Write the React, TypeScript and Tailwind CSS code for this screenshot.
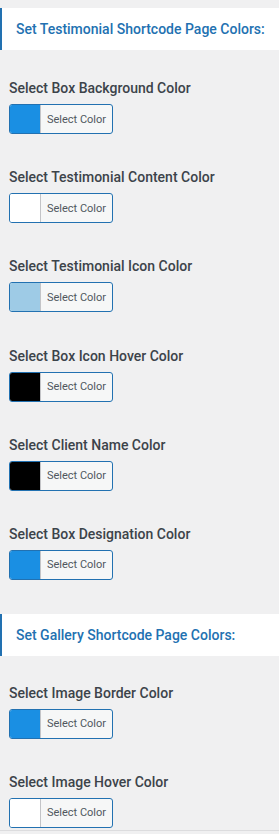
import React from 'react';

type Field = { label: string; color: string };

const testimonialFields: Field[] = [
  { label: 'Select Box Background Color', color: '#1a8fe3' },
  { label: 'Select Testimonial Content Color', color: '#ffffff' },
  { label: 'Select Testimonial Icon Color', color: '#9ecbe6' },
  { label: 'Select Box Icon Hover Color', color: '#000000' },
  { label: 'Select Client Name Color', color: '#000000' },
  { label: 'Select Box Designation Color', color: '#1a8fe3' },
];

const galleryFields: Field[] = [
  { label: 'Select Image Border Color', color: '#1a8fe3' },
  { label: 'Select Image Hover Color', color: '#ffffff' },
];

const SectionHeader = ({ title }: { title: string }) => (
  <div className="h-[42px] bg-white border-l-2 border-[#2271b1] flex items-center pl-[14px]">
    <h2 className="text-[14px] font-medium text-[#2271b1] leading-none">{title}</h2>
  </div>
);

const ColorField = ({ label, color }: Field) => (
  <div className="px-[9px]">
    <label className="block text-[14px] leading-[20px] font-medium text-[#3c434a]">{label}</label>
    <button className="mt-[6px] flex h-[30px] w-[104px] overflow-hidden rounded-[3px] border border-[#2271b1] bg-[#f6f7f7]">
      <span className="block h-full w-[31px] border-r border-[#c3c4c7]" style={{ backgroundColor: color }} />
      <span className="flex-1 self-center text-center text-[11px] leading-none text-[#50575e]">Select Color</span>
    </button>
  </div>
);

export default function App() {
  return (
    <div className="w-[279px] h-[834px] bg-[#f0f0f1] font-['Roboto',sans-serif] overflow-hidden pt-[8px]">
      <SectionHeader title="Set Testimonial Shortcode Page Colors:" />
      <div className="flex flex-col gap-[33.2px] pt-[28px]">
        {testimonialFields.map((f) => (
          <ColorField key={f.label} {...f} />
        ))}
      </div>
      <div className="mt-[34px]">
        <SectionHeader title="Set Gallery Shortcode Page Colors:" />
      </div>
      <div className="flex flex-col gap-[33px] pt-[27px] pb-[2px] border-b border-[#dcdcde]">
        {galleryFields.map((f) => (
          <ColorField key={f.label} {...f} />
        ))}
      </div>
    </div>
  );
}
